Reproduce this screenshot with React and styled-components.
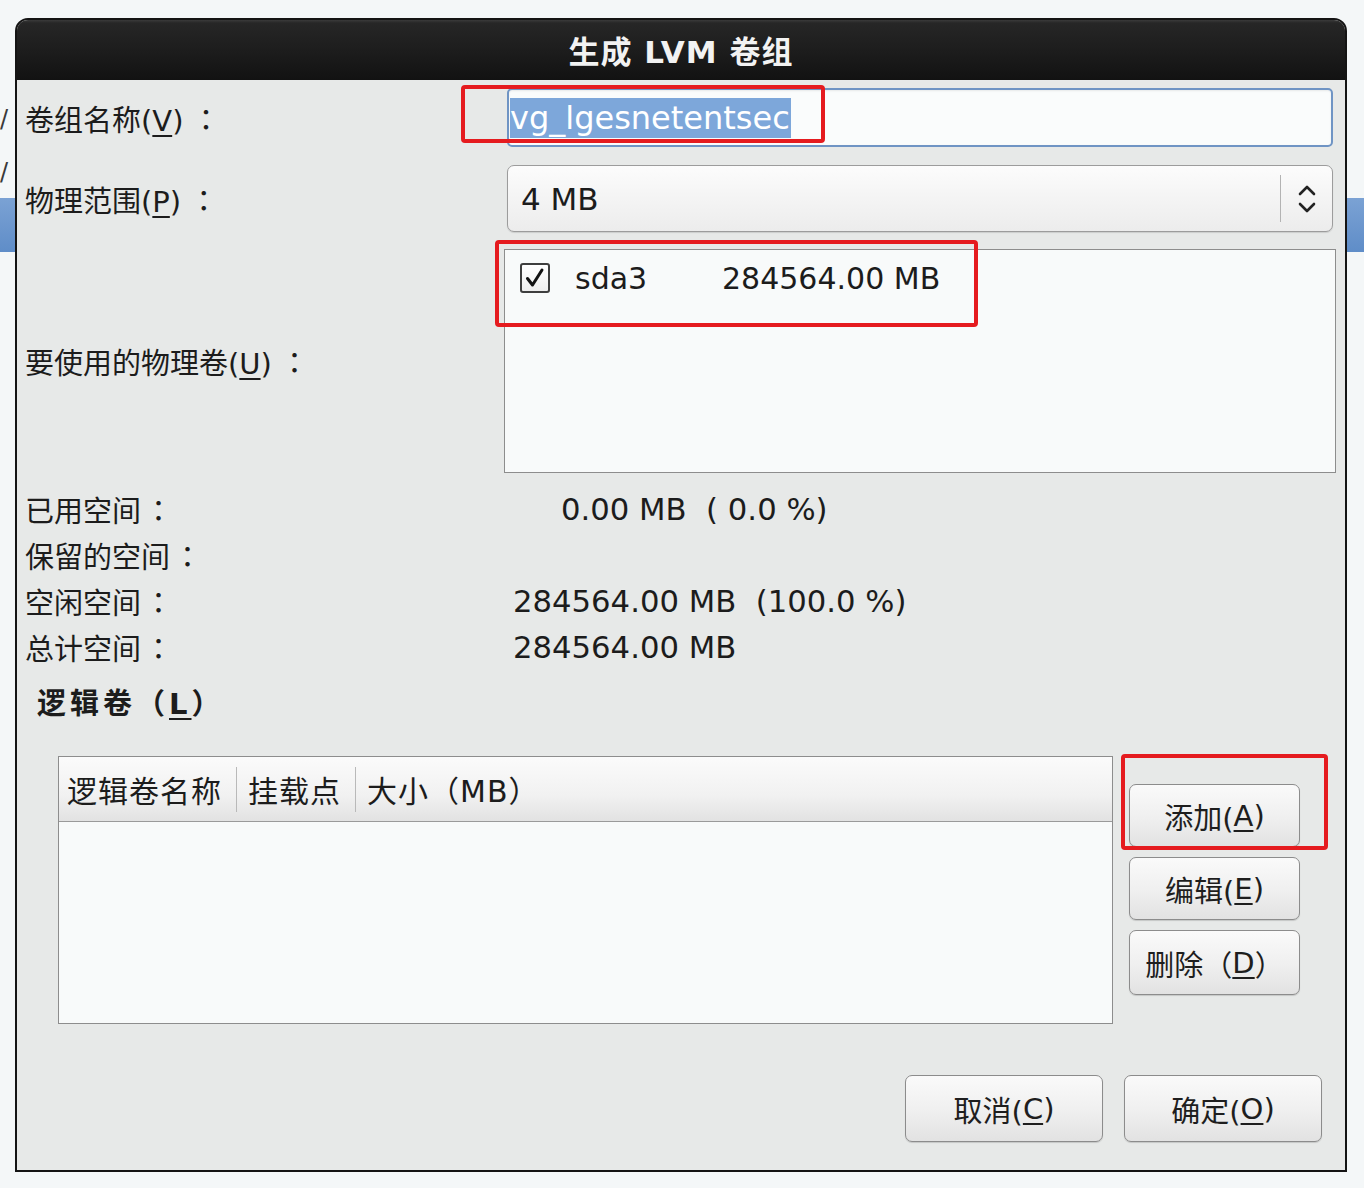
import React from 'react';
import styled, { createGlobalStyle } from 'styled-components';

const Global = createGlobalStyle`
  html, body { margin: 0; padding: 0; background: #f4f7f8; }
  body { font-family: "DejaVu Sans", "Noto Sans CJK SC", sans-serif; color: #1c1c1c; }
  * { box-sizing: border-box; }
`;

const Desktop = styled.div`
  position: relative;
  width: 1364px;
  height: 1188px;
  padding: 18px 17px 0 15px;
  overflow: hidden;
`;

const BackdropBand = styled.div`
  position: absolute;
  left: 0;
  right: 0;
  top: 198px;
  height: 54px;
  background: linear-gradient(#7ba2d4, #5f8dc8);
`;

const BackdropGlyph = styled.span`
  position: absolute;
  left: 0;
  top: ${(p) => p.$top}px;
  font-size: 24px;
  line-height: 30px;
  color: #3a3a3a;
`;

const Dialog = styled.div`
  position: relative;
  z-index: 1;
  height: 1154px;
  display: flex;
  flex-direction: column;
  background: #e7e9e8;
  border: 2px solid #141414;
  border-radius: 13px 13px 0 0;
`;

const TitleBar = styled.div`
  height: 60px;
  flex: none;
  display: flex;
  align-items: center;
  justify-content: center;
  border-radius: 11px 11px 0 0;
  background: linear-gradient(#3a3a3a 0, #262626 3px, #1d1d1d 50%, #121212 100%);
  color: #f2f2f2;
  font-weight: bold;
  font-size: 31px;
  letter-spacing: 1px;
  padding-bottom: 2px;
`;

const Body = styled.div`
  flex: 1;
  display: flex;
  flex-direction: column;
  padding: 8px 9px 0 8px;
`;

const FormGrid = styled.div`
  display: grid;
  grid-template-columns: 479px 1fr;
  grid-template-rows: 60px 67px 224px;
  row-gap: 17px;
  & > :nth-child(2) { margin-bottom: 1px; }
`;

const Label = styled.div`
  align-self: center;
  font-size: 29px;
  white-space: nowrap;
`;

const Colon = styled.span`
  font-family: "Noto Sans CJK TC", "Noto Sans CJK SC", sans-serif;
  margin-left: ${(p) => (p.$after ? 8 : 3)}px;
`;

const Mn = styled.span`
  text-decoration: underline;
  text-decoration-thickness: 2px;
  text-underline-offset: 4px;
`;

const Anchor = styled.div`
  position: relative;
  margin: ${(p) => p.$margin || '0'};
  min-width: 0;
`;

const Highlight = styled.div`
  position: absolute;
  left: ${(p) => p.$l}px;
  top: ${(p) => p.$t}px;
  width: ${(p) => p.$w}px;
  height: ${(p) => p.$h}px;
  border: 4px solid #e51b1f;
  border-radius: 4px;
  pointer-events: none;
  z-index: 2;
`;

const TextInput = styled.div`
  height: 100%;
  display: flex;
  align-items: center;
  padding-left: 1px;
  background: #fafcfc;
  border: 2px solid #6f94c4;
  border-radius: 5px;
  box-shadow: inset 0 1px 2px rgba(0, 0, 0, 0.08);
`;

const Selected = styled.span`
  background: #7da7da;
  color: #ffffff;
  font-size: 32px;
  line-height: 40px;
  padding-right: 1px;
`;

const Combo = styled.div`
  height: 100%;
  display: flex;
  align-items: center;
  padding-left: 13px;
  background: linear-gradient(#fcfcfc, #ececec);
  border: 1px solid #9c9c9c;
  border-radius: 7px;
  box-shadow: 0 1px 1px rgba(0, 0, 0, 0.12);
`;

const ComboValue = styled.span`
  flex: 1;
  font-size: 31px;
`;

const ComboSep = styled.div`
  width: 1px;
  height: 47px;
  background: #b3b3b3;
`;

const ComboArrow = styled.div`
  width: 51px;
  display: flex;
  align-items: center;
  justify-content: center;
`;

const PVList = styled.div`
  height: 100%;
  background: #f8fafa;
  border: 1px solid #8d8d8d;
  padding: 13px 15px;
`;

const PVRow = styled.div`
  display: flex;
  align-items: center;
  height: 30px;
  font-size: 30px;
`;

const Check = styled.div`
  width: 30px;
  height: 30px;
  flex: none;
  border: 2px solid #3e3e3e;
  border-radius: 3px;
  background: linear-gradient(#ffffff, #ededed);
  display: flex;
  align-items: center;
  justify-content: center;
  margin-right: 25px;
`;

const PVName = styled.span`
  width: 147px;
`;

const StatsGrid = styled.div`
  display: grid;
  grid-template-columns: 479px 1fr;
  grid-auto-rows: 46px;
  margin-top: 13px;
  align-items: center;
`;

const StatValue = styled.div`
  font-size: 30.7px;
  padding-left: ${(p) => (p.$indent ? 57 : 9)}px;
  white-space: pre;
`;

const SectionHeading = styled.div`
  margin-top: 14px;
  height: 40px;
  line-height: 40px;
  padding-left: 12px;
  font-size: 29px;
  font-weight: bold;
  letter-spacing: 4px;
`;

const LVSection = styled.div`
  margin-top: 32px;
  display: flex;
  gap: 16px;
  padding-left: 33px;
`;

const LVTable = styled.div`
  width: 1055px;
  height: 268px;
  display: flex;
  flex-direction: column;
  background: #f8fafa;
  border: 1px solid #8d8d8d;
`;

const LVHeader = styled.div`
  height: 65px;
  display: flex;
  align-items: center;
  background: linear-gradient(#fbfbfb, #f1f1f1 60%, #e2e2e2);
  border-bottom: 1px solid #9a9a9a;
`;

const LVCol = styled.div`
  width: ${(p) => (p.$w ? `${p.$w}px` : 'auto')};
  flex: ${(p) => (p.$w ? 'none' : 1)};
  height: 45px;
  display: flex;
  align-items: center;
  padding-left: ${(p) => p.$pad}px;
  font-size: 30px;
  letter-spacing: 1px;
  border-right: ${(p) => (p.$sep ? '1px solid #b9b9b9' : 'none')};
  white-space: nowrap;
`;

const ButtonColumn = styled.div`
  position: relative;
  width: 171px;
  padding-top: 28px;
  display: flex;
  flex-direction: column;
  gap: 10px;
`;

const Button = styled.div`
  width: ${(p) => p.$w || 171}px;
  height: ${(p) => p.$h || 63}px;
  display: flex;
  align-items: center;
  justify-content: center;
  font-size: 29px;
  color: #1e1e1e;
  white-space: nowrap;
  background: linear-gradient(#fafafa, #efefef 55%, #e2e2e2);
  border: 1px solid #8c8c8c;
  border-radius: 7px;
  box-shadow: 0 1px 1px rgba(0, 0, 0, 0.15);
`;

const Footer = styled.div`
  margin-top: 51px;
  display: flex;
  justify-content: flex-end;
  gap: 21px;
  padding-right: 14px;
`;

const Chevrons = () => (
  <svg width="22" height="38" viewBox="0 0 22 38" fill="none">
    <path d="M4 14 L11 7 L18 14" stroke="#222" strokeWidth="2.6" strokeLinecap="round" strokeLinejoin="round" />
    <path d="M4 24 L11 31 L18 24" stroke="#222" strokeWidth="2.6" strokeLinecap="round" strokeLinejoin="round" />
  </svg>
);

const CheckMark = () => (
  <svg width="22" height="22" viewBox="0 0 22 22" fill="none">
    <path d="M3.5 11.5 L8.5 18 L18 3" stroke="#111" strokeWidth="3" strokeLinecap="round" strokeLinejoin="round" />
  </svg>
);

export default function App() {
  return (
    <>
      <Global />
      <Desktop>
        <BackdropBand />
        <BackdropGlyph $top={104}>/</BackdropGlyph>
        <BackdropGlyph $top={157}>/</BackdropGlyph>
        <Dialog>
          <TitleBar>生成 LVM 卷组</TitleBar>
          <Body>
            <FormGrid>
              <Label>卷组名称(<Mn>V</Mn>)<Colon $after>：</Colon></Label>
              <Anchor $margin="0 3px">
                <TextInput>
                  <Selected>vg_lgesnetentsec</Selected>
                </TextInput>
                <Highlight $l={-46} $t={-3} $w={364} $h={58} />
              </Anchor>

              <Label>物理范围(<Mn>P</Mn>)<Colon $after>：</Colon></Label>
              <Anchor $margin="0 3px">
                <Combo>
                  <ComboValue>4 MB</ComboValue>
                  <ComboSep />
                  <ComboArrow>
                    <Chevrons />
                  </ComboArrow>
                </Combo>
              </Anchor>

              <Label>要使用的物理卷(<Mn>U</Mn>)<Colon $after>：</Colon></Label>
              <Anchor>
                <PVList>
                  <PVRow>
                    <Check>
                      <CheckMark />
                    </Check>
                    <PVName>sda3</PVName>
                    <span>284564.00 MB</span>
                  </PVRow>
                </PVList>
                <Highlight $l={-9} $t={-9} $w={483} $h={87} />
              </Anchor>
            </FormGrid>

            <StatsGrid>
              <Label>已用空间<Colon>：</Colon></Label>
              <StatValue $indent>{'0.00 MB  ( 0.0 %)'}</StatValue>
              <Label>保留的空间<Colon>：</Colon></Label>
              <StatValue />
              <Label>空闲空间<Colon>：</Colon></Label>
              <StatValue>{'284564.00 MB  (100.0 %)'}</StatValue>
              <Label>总计空间<Colon>：</Colon></Label>
              <StatValue>284564.00 MB</StatValue>
            </StatsGrid>

            <SectionHeading>逻辑卷（<Mn>L</Mn>）</SectionHeading>

            <LVSection>
              <LVTable>
                <LVHeader>
                  <LVCol $w={178} $pad={8} $sep>逻辑卷名称</LVCol>
                  <LVCol $w={119} $pad={11} $sep>挂载点</LVCol>
                  <LVCol $pad={11}>大小（MB）</LVCol>
                </LVHeader>
              </LVTable>
              <ButtonColumn>
                <Button>添加(<Mn>A</Mn>)</Button>
                <Button>编辑(<Mn>E</Mn>)</Button>
                <Button $h={65}>删除（<Mn>D</Mn>）</Button>
                <Highlight $l={-8} $t={-2} $w={207} $h={96} />
              </ButtonColumn>
            </LVSection>

            <Footer>
              <Button $w={198} $h={67}>取消(<Mn>C</Mn>)</Button>
              <Button $w={198} $h={67}>确定(<Mn>O</Mn>)</Button>
            </Footer>
          </Body>
        </Dialog>
      </Desktop>
    </>
  );
}
